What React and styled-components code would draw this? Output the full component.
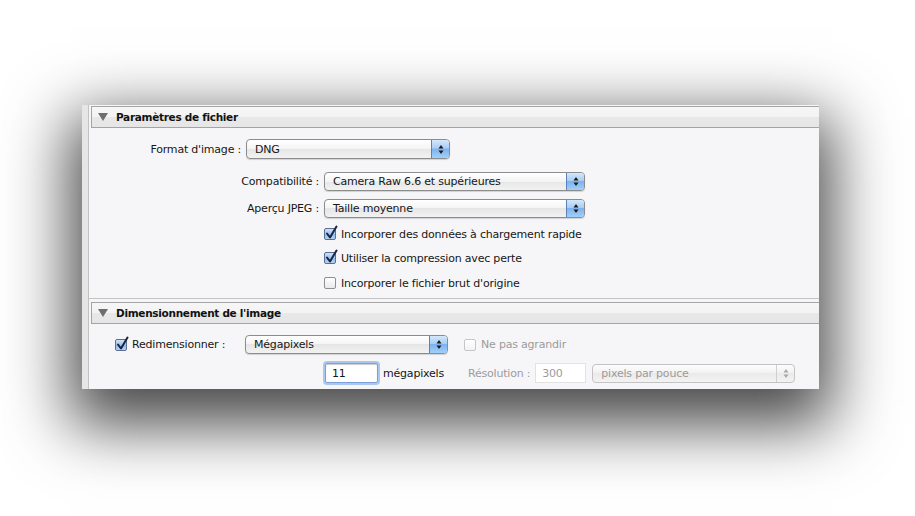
import React from "react";
import styled, { createGlobalStyle } from "styled-components";

const GlobalStyle = createGlobalStyle`
  html, body {
    margin: 0;
    padding: 0;
    background: #ffffff;
  }
  body {
    font-family: "DejaVu Sans", "Liberation Sans", sans-serif;
    font-size: 11px;
    letter-spacing: -0.2px;
    color: #161616;
  }
`;

const Page = styled.div`
  width: 915px;
  height: 516px;
  box-sizing: border-box;
  padding: 105px 0 0 82px;
  overflow: hidden;
`;

const Panel = styled.div`
  width: 737px;
  height: 284px;
  display: flex;
  background: #e9e9e9;
  box-shadow: 0 24px 60px 12px rgba(0, 0, 0, 0.72);
  overflow: hidden;
`;

const Gutter = styled.div`
  width: 6px;
  background: #e6e6e6;
  border-right: 1px solid #c2c2c2;
`;

const Column = styled.div`
  flex: 1;
  display: flex;
  flex-direction: column;
  background: #f6f6f8;
  padding-top: 1px;
`;

const Header = styled.div`
  height: 20px;
  margin-left: 2px;
  display: flex;
  align-items: center;
  gap: 8px;
  padding-left: 6px;
  border: 1px solid #a4a4a4;
  border-right: none;
  background: linear-gradient(#f6f6f6 0%, #f3f3f3 50%, #e8e8e8 50%, #e6e6e6 100%);
  font-weight: bold;
  font-size: 10.5px;
  letter-spacing: -0.3px;
  color: #111;
`;

const Triangle = styled.span`
  width: 0;
  height: 0;
  border-left: 5px solid transparent;
  border-right: 5px solid transparent;
  border-top: 8px solid #6e6e6e;
`;

const SectionBody = styled.div`
  display: flex;
  flex-direction: column;
  height: ${(p) => p.h}px;
  box-sizing: border-box;
  padding-top: ${(p) => p.top}px;
  padding-left: 2px;
  border-bottom: ${(p) => (p.divider ? "1px solid #c4c4c4" : "none")};
  margin-bottom: ${(p) => (p.divider ? 3 : 0)}px;
`;

const Row = styled.div`
  display: flex;
  align-items: center;
  height: ${(p) => p.h || 20}px;
  margin-top: ${(p) => p.mt || 0}px;
  padding-left: ${(p) => p.indent || 0}px;
`;

const Label = styled.div`
  width: ${(p) => p.w}px;
  flex: none;
  text-align: ${(p) => p.align || "right"};
  margin-right: 5px;
  white-space: nowrap;
  color: ${(p) => (p.disabled ? "#9b9b9b" : "#161616")};
`;

const CheckLabel = styled.div`
  width: ${(p) => p.w}px;
  flex: none;
  display: flex;
  align-items: center;
`;

const Text = styled.span`
  white-space: nowrap;
  margin-left: ${(p) => p.ml || 0}px;
  color: ${(p) => (p.disabled ? "#9b9b9b" : "#161616")};
`;

const PopupBox = styled.div`
  width: ${(p) => p.w}px;
  height: ${(p) => p.h || 19}px;
  box-sizing: border-box;
  display: flex;
  align-items: stretch;
  border: 1px solid ${(p) => (p.disabled ? "#c3c3c3" : "#8c8c8c")};
  border-radius: 4px;
  background: ${(p) =>
    p.disabled
      ? "linear-gradient(#fdfdfd, #f1f1f1 50%, #eaeaea 50%, #f3f3f3)"
      : "linear-gradient(#ffffff, #f4f4f4 50%, #e6e6e6 50%, #f2f2f2)"};
  box-shadow: ${(p) => (p.disabled ? "none" : "0 1px 1px rgba(0,0,0,0.15)")};
  overflow: hidden;
`;

const PopupValue = styled.div`
  flex: 1;
  display: flex;
  align-items: center;
  padding-left: 8px;
  white-space: nowrap;
  color: ${(p) => (p.disabled ? "#9b9b9b" : "#161616")};
`;

const Stepper = styled.div`
  width: 17px;
  display: flex;
  align-items: center;
  justify-content: center;
  border-left: 1px solid ${(p) => (p.disabled ? "#cfcfcf" : "#5a82b8")};
  background: ${(p) =>
    p.disabled
      ? "transparent"
      : "linear-gradient(#d4e8fb, #a9cdf4 45%, #7fb2ec 50%, #9fd0fb 100%)"};
`;

const Arrows = ({ color }) => (
  <svg width="6" height="11" viewBox="0 0 6 11">
    <path d="M3 1 L5.5 4.5 L0.5 4.5 Z" fill={color} />
    <path d="M3 10 L5.5 6.5 L0.5 6.5 Z" fill={color} />
  </svg>
);

const Popup = ({ w, h, value, disabled }) => (
  <PopupBox w={w} h={h} disabled={disabled}>
    <PopupValue disabled={disabled}>{value}</PopupValue>
    <Stepper disabled={disabled}>
      <Arrows color={disabled ? "#a8a8a8" : "#1a1a1a"} />
    </Stepper>
  </PopupBox>
);

const BoxMark = styled.span`
  position: relative;
  width: 12px;
  height: 12px;
  flex: none;
  box-sizing: border-box;
  border: 1px solid ${(p) => (p.disabled ? "#c6c6c6" : p.checked ? "#5a6f93" : "#8f8f8f")};
  border-radius: 2px;
  background: ${(p) =>
    p.checked
      ? "linear-gradient(#cfe2f8, #94bdec 60%, #b6d4f6)"
      : p.disabled
      ? "linear-gradient(#ffffff, #f2f2f2)"
      : "linear-gradient(#ffffff, #e9e9e9)"};
  margin-right: 5px;
`;

const Tick = styled.svg`
  position: absolute;
  left: 0px;
  top: -4px;
`;

const Checkbox = ({ checked, disabled, children }) => (
  <>
    <BoxMark checked={checked} disabled={disabled}>
      {checked && (
        <Tick width="14" height="15" viewBox="0 0 14 15">
          <path
            d="M2 8.5 L5 12.5 L11.5 1.5"
            fill="none"
            stroke="#1c2440"
            strokeWidth="2"
            strokeLinecap="round"
            strokeLinejoin="round"
          />
        </Tick>
      )}
    </BoxMark>
    <Text disabled={disabled}>{children}</Text>
  </>
);

const Field = styled.div`
  width: ${(p) => p.w}px;
  height: 20px;
  box-sizing: border-box;
  display: flex;
  align-items: center;
  padding-left: 6px;
  background: #ffffff;
  border: 1px solid ${(p) => (p.focused ? "#7c9fd6" : "#e2e2e2")};
  border-radius: ${(p) => (p.focused ? "2px" : "0")};
  box-shadow: ${(p) =>
    p.focused ? "0 0 0 2px #a9c8f0, inset 0 1px 1px rgba(0,0,0,0.2)" : "none"};
  color: ${(p) => (p.disabled ? "#9b9b9b" : "#161616")};
`;

export default function App() {
  return (
    <>
      <GlobalStyle />
      <Page>
        <Panel>
          <Gutter />
          <Column>
            <Header>
              <Triangle />
              Paramètres de fichier
            </Header>
            <SectionBody h={171} top={11} divider>
              <Row h={20}>
                <Label w={150}>Format d'image :</Label>
                <Popup w={204} h={20} value="DNG" />
              </Row>
              <Row h={19} mt={13}>
                <Label w={228}>Compatibilité :</Label>
                <Popup w={261} value="Camera Raw 6.6 et supérieures" />
              </Row>
              <Row h={19} mt={8}>
                <Label w={228}>Aperçu JPEG :</Label>
                <Popup w={261} value="Taille moyenne" />
              </Row>
              <Row h={16} mt={8} indent={233}>
                <Checkbox checked>Incorporer des données à chargement rapide</Checkbox>
              </Row>
              <Row h={16} mt={8} indent={233}>
                <Checkbox checked>Utiliser la compression avec perte</Checkbox>
              </Row>
              <Row h={16} mt={9} indent={233}>
                <Checkbox>Incorporer le fichier brut d'origine</Checkbox>
              </Row>
            </SectionBody>
            <Header>
              <Triangle />
              Dimensionnement de l'image
            </Header>
            <SectionBody h={64} top={11}>
              <Row h={19} indent={24}>
                <CheckLabel w={130}>
                  <Checkbox checked>Redimensionner :</Checkbox>
                </CheckLabel>
                <Popup w={203} value="Mégapixels" />
                <Text ml={16} />
                <Checkbox disabled>Ne pas agrandir</Checkbox>
              </Row>
              <Row h={20} mt={9} indent={234}>
                <Field w={53} focused>
                  11
                </Field>
                <Text ml={5}>mégapixels</Text>
                <Text ml={24} disabled>
                  Résolution :
                </Text>
                <Text ml={5} />
                <Field w={51} disabled>
                  300
                </Field>
                <Text ml={6} />
                <Popup w={203} value="pixels par pouce" disabled />
              </Row>
            </SectionBody>
          </Column>
        </Panel>
      </Page>
    </>
  );
}
